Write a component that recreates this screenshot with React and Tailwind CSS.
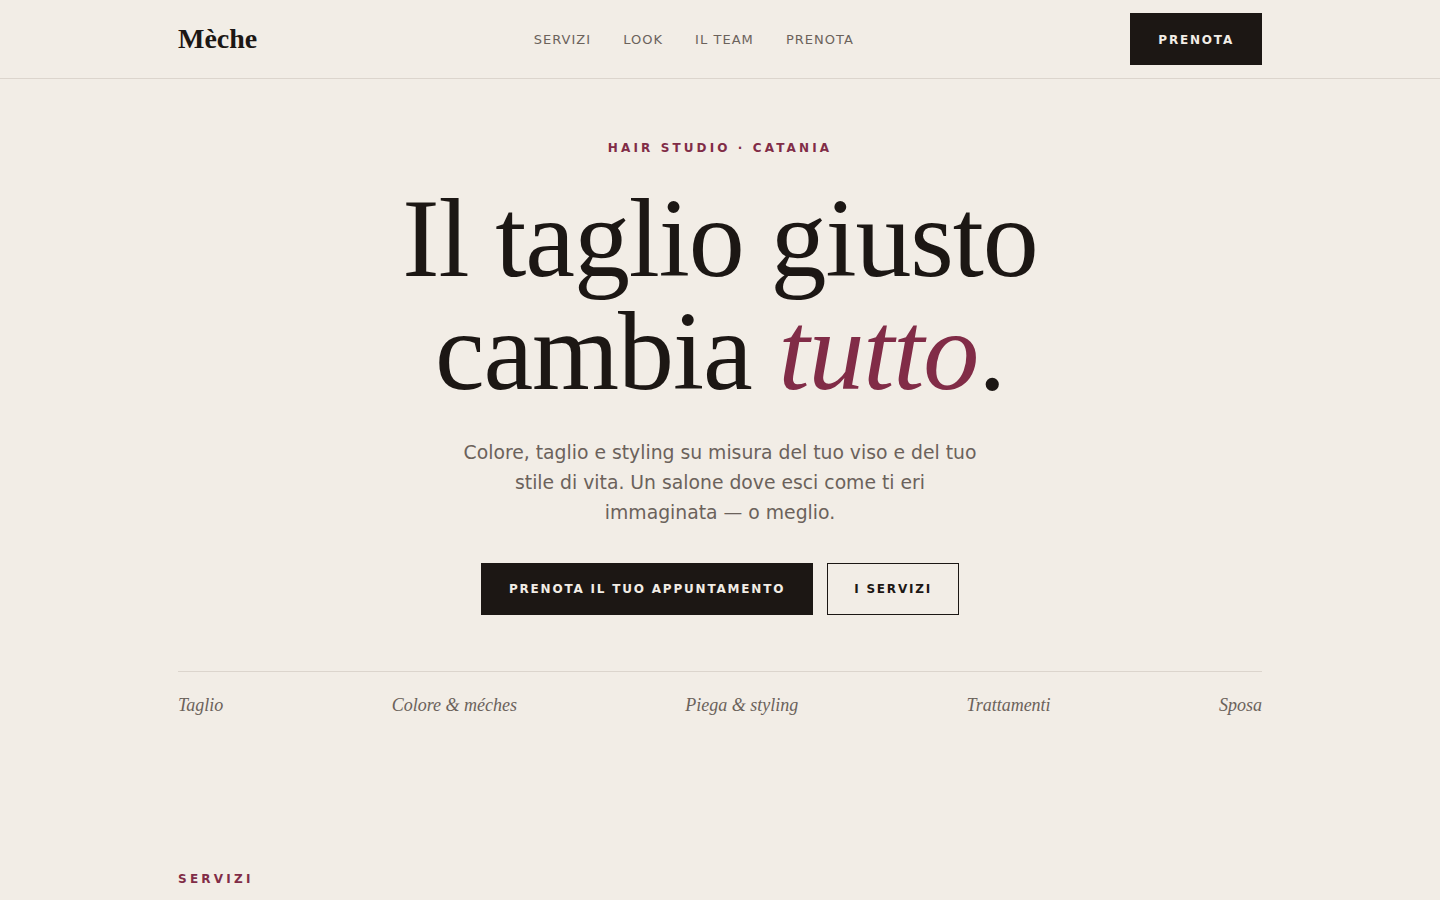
import React from 'react';

const NAV = ['Servizi', 'Look', 'Il team', 'Prenota'];
const SERVICES = ['Taglio', 'Colore & méches', 'Piega & styling', 'Trattamenti', 'Sposa'];

const serif = "font-['Liberation_Serif','Times_New_Roman',serif]";
const sans = "font-['DejaVu_Sans','Noto_Sans',sans-serif]";

const Header = () => (
  <header className="border-b border-[#dcd5cd]">
    <div className="mx-auto flex h-[78px] w-[1084px] items-center justify-between">
      <a href="#" className={`${serif} text-[28px] font-bold leading-none text-[#1c1714]`}>
        Mèche
      </a>
      <nav className="flex items-center gap-8 pt-[2px]">
        {NAV.map((item) => (
          <a
            key={item}
            href="#"
            className="text-[13px] uppercase tracking-[0.08em] text-[#6b625b]"
          >
            {item}
          </a>
        ))}
      </nav>
      <a
        href="#"
        className="flex h-[52px] items-center bg-[#1c1714] px-7 pt-[2px] text-[12px] font-bold uppercase tracking-[0.15em] text-[#f2ede6]"
      >
        Prenota
      </a>
    </div>
  </header>
);

const Hero = () => (
  <section className="mx-auto w-[1084px] pt-[61px]">
    <div className="flex flex-col items-center text-center">
      <p className="text-[12px] font-bold uppercase leading-4 tracking-[0.26em] text-[#812c47]">
        Hair Studio · Catania
      </p>
      <h1
        className={`${serif} mt-[26px] text-[112px] leading-[113px] tracking-[-0.01em] text-[#1c1714]`}
      >
        Il taglio giusto
        <br />
        cambia <em className="text-[#812c47]">tutto</em>.
      </h1>
      <p className="mt-[30px] max-w-[520px] text-[18.8px] leading-[30px] text-[#6b625b]">
        Colore, taglio e styling su misura del tuo viso e del tuo stile di vita. Un salone
        dove esci come ti eri immaginata — o meglio.
      </p>
      <div className="mt-[35px] flex items-center gap-[14px]">
        <a
          href="#"
          className="flex h-[52px] items-center bg-[#1c1714] px-7 text-[12px] font-bold uppercase tracking-[0.15em] text-[#f2ede6]"
        >
          Prenota il tuo appuntamento
        </a>
        <a
          href="#"
          className="flex h-[52px] items-center border border-[#1c1714] px-[26px] text-[12px] font-bold uppercase tracking-[0.15em] text-[#1c1714]"
        >
          I servizi
        </a>
      </div>
    </div>

    <div className="mt-14 flex items-center justify-between border-t border-[#dcd5cd] pt-[19px]">
      {SERVICES.map((s) => (
        <span key={s} className={`${serif} text-[18px] italic leading-7 text-[#6b625b]`}>
          {s}
        </span>
      ))}
    </div>
  </section>
);

const Services = () => (
  <section className="mx-auto w-[1084px] pt-[152px]">
    <p className="text-[12px] font-bold uppercase leading-4 tracking-[0.27em] text-[#812c47]">
      Servizi
    </p>
  </section>
);

export default function App() {
  return (
    <div className={`${sans} min-h-screen bg-[#f2ede6]`}>
      <Header />
      <Hero />
      <Services />
    </div>
  );
}
